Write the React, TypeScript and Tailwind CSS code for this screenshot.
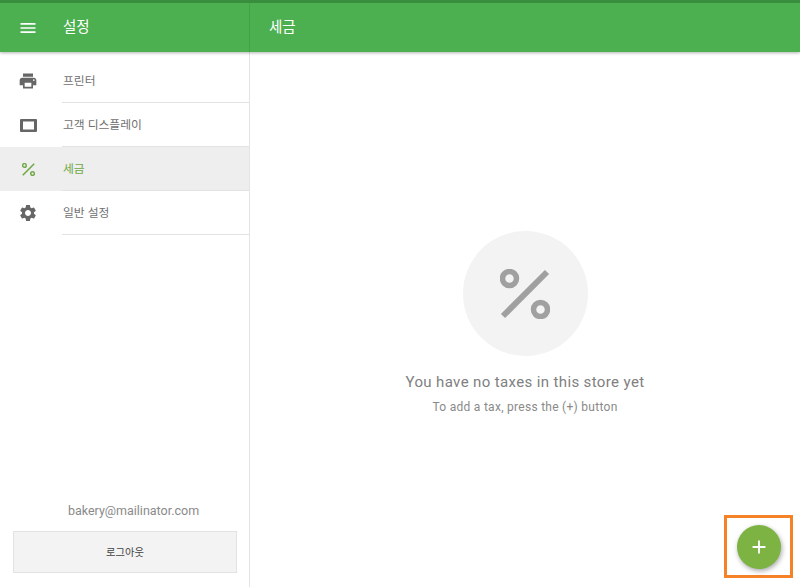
import React from 'react';
import { MdMenu, MdPrint, MdSettings, MdAdd } from 'react-icons/md';

const PercentIcon = ({ className }: { className?: string }) => (
  <svg viewBox="0 0 50 50" className={className} fill="none" stroke="currentColor">
    <circle cx="9.500" cy="9.500" r="7" strokeWidth="5.500" />
    <circle cx="40.500" cy="40.500" r="7" strokeWidth="5.500" />
    <path d="M47 3 L3 47" strokeWidth="6" />
  </svg>
);

const TabletIcon = () => (
  <svg viewBox="0 0 17 13" className="w-[17px] h-[13px]" fill="currentColor">
    <path fillRule="evenodd" d="M1 0h15a1 1 0 0 1 1 1v11a1 1 0 0 1-1 1H1a1 1 0 0 1-1-1V1a1 1 0 0 1 1-1zm2 2.500v8h11v-8z" />
  </svg>
);

const items = [
  { label: '프린터', icon: <MdPrint size={20} /> },
  { label: '고객 디스플레이', icon: <TabletIcon /> },
  { label: '세금', icon: <PercentIcon className="w-[13px] h-[13px]" />, active: true },
  { label: '일반 설정', icon: <MdSettings size={20} /> },
];

const App: React.FC = () => {
  return (
    <div className="relative w-[800px] h-[587px] overflow-hidden bg-white flex flex-col font-['Roboto','Noto_Sans_CJK_KR',sans-serif]">
      <header className="h-[52px] shrink-0 flex bg-[#4caf50] border-t-[3px] border-[#388e3c] shadow-[0_1px_3px_rgba(0,0,0,0.3)] z-10 text-white">
        <div className="w-[250px] flex items-center border-r border-[#45a049]">
          <div className="w-[56px] flex justify-center">
            <MdMenu size={20} />
          </div>
          <span className="ml-[7px] pt-[1px] text-[14.500px]">설정</span>
        </div>
        <div className="flex items-center pl-[19px] pt-[1px] text-[14.500px]">세금</div>
      </header>

      <div className="flex-1 flex min-h-0">
        <aside className="w-[250px] shrink-0 border-r border-[#e4e4e4] flex flex-col pt-[7px]">
          {items.map((item) => (
            <div key={item.label} className={`h-[44px] flex ${item.active ? 'bg-[#eeeeee]' : ''}`}>
              <div className={`w-[62px] flex items-center justify-center pr-[6px] ${item.active ? 'text-[#6ea844]' : 'text-[#666666]'}`}>
                {item.icon}
              </div>
              <div className={`flex-1 flex items-center border-b border-[#e2e2e2] pl-[1px] pt-[2px] text-[11.800px] ${item.active ? 'text-[#6ea844]' : 'text-[#707070]'}`}>
                {item.label}
              </div>
            </div>
          ))}
          <div className="mt-auto pl-[13px] pr-[12px] pb-[14px]">
            <div className="text-center text-[12.500px] text-[#8a8a8a] mb-[10px] pl-[17px]">bakery@mailinator.com</div>
            <button className="w-full h-[42px] pt-[2px] bg-[#f3f3f3] border border-[#e2e2e2] text-[10.300px] text-[#444444]">로그아웃</button>
          </div>
        </aside>

        <main className="flex-1 flex flex-col items-center pt-[179px]">
          <div className="w-[125px] h-[125px] rounded-full bg-[#f3f3f3] flex items-center justify-center text-[#a0a0a0]">
            <PercentIcon className="w-[50px] h-[50px]" />
          </div>
          <p className="mt-[16px] text-[15px] leading-[20px] tracking-[0.37px] text-[#808080]">You have no taxes in this store yet</p>
          <p className="mt-[6px] text-[12px] leading-[18px] tracking-[0.28px] text-[#8a8a8a]">To add a tax, press the (+) button</p>
        </main>
      </div>

      <div className="absolute left-[724px] top-[515px] w-[69px] h-[63px] border-[3px] border-[#f58226] flex items-center justify-center z-20">
        <button className="w-[44px] h-[44px] rounded-full bg-[#7cb342] text-white flex items-center justify-center shadow-[1px_2px_5px_rgba(0,0,0,0.35)]">
          <MdAdd size={22} />
        </button>
      </div>
    </div>
  );
};

export default App;
